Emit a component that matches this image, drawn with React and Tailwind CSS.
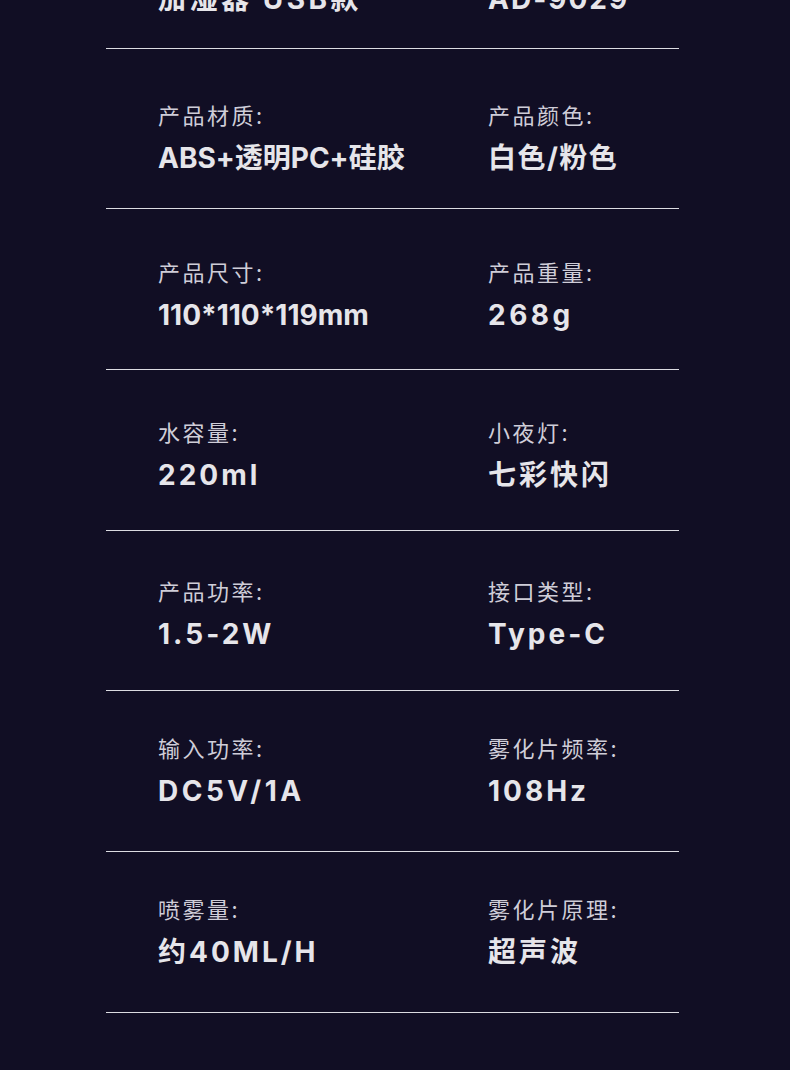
import React from "react";

const rows = [
  {
    pt: "pt-[53px]",
    cells: [
      { label: "产品名称:", value: "加湿器 USB款", track: "tracking-[3.5px]" },
      { label: "产品型号:", value: "AD-9029", track: "tracking-[2px]" },
    ],
  },
  {
    pt: "pt-[51px]",
    cells: [
      { label: "产品材质:", value: "ABS+透明PC+硅胶", track: "tracking-[0px]" },
      { label: "产品颜色:", value: "白色/粉色", track: "tracking-[1.5px]" },
    ],
  },
  {
    pt: "pt-[48px]",
    cells: [
      { label: "产品尺寸:", value: "110*110*119mm", track: "tracking-[0px]" },
      { label: "产品重量:", value: "268g", track: "tracking-[3.5px]" },
    ],
  },
  {
    pt: "pt-[47px]",
    cells: [
      { label: "水容量:", value: "220ml", track: "tracking-[3px]" },
      { label: "小夜灯:", value: "七彩快闪", track: "tracking-[3px]" },
    ],
  },
  {
    pt: "pt-[45px]",
    cells: [
      { label: "产品功率:", value: "1.5-2W", track: "tracking-[3px]" },
      { label: "接口类型:", value: "Type-C", track: "tracking-[3px]" },
    ],
  },
  {
    pt: "pt-[42px]",
    cells: [
      { label: "输入功率:", value: "DC5V/1A", track: "tracking-[3.5px]" },
      { label: "雾化片频率:", value: "108Hz", track: "tracking-[3px]" },
    ],
  },
  {
    pt: "pt-[42px]",
    cells: [
      { label: "喷雾量:", value: "约40ML/H", track: "tracking-[3px]" },
      { label: "雾化片原理:", value: "超声波", track: "tracking-[3px]" },
    ],
  },
];

const Cell = ({ label, value, track }) => (
  <div className="flex flex-col">
    <div className="text-[22px] leading-[28px] tracking-[2.5px] text-[#cfcdd8] font-['Noto_Sans_CJK_SC',sans-serif]">
      {label}
    </div>
    <div
      className={`mt-[13px] text-[28px] leading-[34px] font-bold text-[#e6e5ea] font-['Inter','Noto_Sans_CJK_SC',sans-serif] [font-feature-settings:'calt'_0] ${track}`}
    >
      {value}
    </div>
  </div>
);

export default function App() {
  return (
    <div className="w-[790px] h-[1070px] overflow-hidden bg-[#110e24]">
      <div className="-mt-[112px] ml-[106px] w-[573px]">
        {rows.map((row, i) => (
          <div
            key={i}
            className={`h-[160.67px] border-b border-[#dcdce2] grid grid-cols-[330px_1fr] pl-[52px] ${row.pt}`}
          >
            <Cell {...row.cells[0]} />
            <Cell {...row.cells[1]} />
          </div>
        ))}
      </div>
    </div>
  );
}
